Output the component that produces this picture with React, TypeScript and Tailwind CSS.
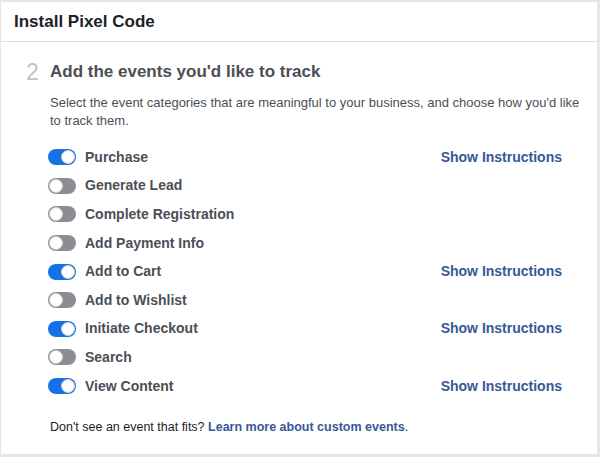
const events = [
  { name: "Purchase", on: true },
  { name: "Generate Lead", on: false },
  { name: "Complete Registration", on: false },
  { name: "Add Payment Info", on: false },
  { name: "Add to Cart", on: true },
  { name: "Add to Wishlist", on: false },
  { name: "Initiate Checkout", on: true },
  { name: "Search", on: false },
  { name: "View Content", on: true },
]

function Toggle({ on }: { on: boolean }) {
  return (
    <div
      className={
        on
          ? "flex h-[16px] w-[28px] items-center justify-end rounded-full bg-[#1471e6] pr-[1px]"
          : "flex h-[16px] w-[28px] items-center justify-start rounded-full bg-[#8a8d91] pl-[1px]"
      }
    >
      <div className="h-[14px] w-[14px] rounded-full border border-[#d0d0d0] bg-white" />
    </div>
  )
}

export default function App() {
  return (
    <div className="h-[457px] w-[600px] bg-[#e6e6e6] pb-[3px] pl-[1px] pr-[3px] pt-[2px] font-['Helvetica','Liberation_Sans',Arial,sans-serif]">
      <div className="flex h-full flex-col bg-white">
        <div className="flex h-[40px] items-center border-b border-[#dddfe2] px-[13px]">
          <h1 className="text-[17px] font-bold text-[#1d2129]">Install Pixel Code</h1>
        </div>
        <div className="flex pl-[25px] pt-[17px]">
          <span className="w-[24px] text-[23px] leading-[26px] text-[#bec3c9]">2</span>
          <div className="flex-1 pr-[35px]">
            <h2 className="text-[17px] font-bold leading-[26px] text-[#4b4f56]">
              Add the events you'd like to track
            </h2>
            <p className="-mr-[25px] mt-[9px] text-[13px] leading-[18px] text-[#4b4f56]">
              Select the event categories that are meaningful to your business, and choose how you'd like to track them.
            </p>
            <div className="mt-[13px] flex flex-col">
              {events.map((e) => (
                <div key={e.name} className="flex h-[28.6px] items-center">
                  <div className="-ml-[2px]">
                    <Toggle on={e.on} />
                  </div>
                  <span className="ml-[9px] flex-1 text-[14px] font-bold text-[#4b4f56]">{e.name}</span>
                  {e.on && (
                    <span className="text-[14px] font-bold text-[#365899]">Show Instructions</span>
                  )}
                </div>
              ))}
            </div>
            <p className="mt-[18px] text-[12.5px] text-[#1d2129]">
              Don't see an event that fits?{" "}
              <span className="font-bold text-[#365899]">Learn more about custom events</span>.
            </p>
          </div>
        </div>
      </div>
    </div>
  )
}
